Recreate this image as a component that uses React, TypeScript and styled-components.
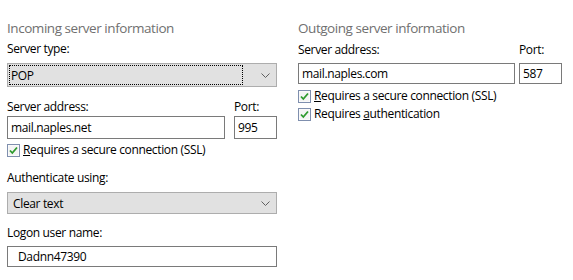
import React from 'react';
import styled, { createGlobalStyle } from 'styled-components';

const GlobalStyle = createGlobalStyle`
  html, body {
    margin: 0;
    padding: 0;
    background: #ffffff;
  }

  body {
    font-family: 'Open Sans', 'Noto Sans', sans-serif;
    font-size: 12px;
    letter-spacing: -0.35px;
    color: #000000;
  }
`;

const Page = styled.div`
  display: grid;
  grid-template-columns: 270px 264px;
  column-gap: 21px;
  padding: 19px 0 0 7px;
  width: 573px;
  height: 280px;
  box-sizing: border-box;
`;

const Column = styled.div`
  display: flex;
  flex-direction: column;
`;

const Title = styled.div`
  color: #707070;
  font-size: 13.5px;
  letter-spacing: -0.45px;
  height: 19px;
  line-height: 19px;
`;

const Label = styled.div<{ $top: number }>`
  height: 16px;
  line-height: 16px;
  margin-top: ${(p) => p.$top}px;
`;

const Row = styled.div<{ $gap: number; $top?: number }>`
  display: grid;
  grid-template-columns: 1fr 43px;
  column-gap: ${(p) => p.$gap}px;
  margin-top: ${(p) => p.$top ?? 0}px;
`;

const TextBox = styled.div<{ $height: number; $indent?: number; $top?: number }>`
  height: ${(p) => p.$height}px;
  line-height: ${(p) => p.$height - 2}px;
  margin-top: ${(p) => p.$top ?? 0}px;
  border: 1px solid #7a7a7a;
  padding-left: ${(p) => p.$indent ?? 3}px;
  box-sizing: border-box;
  background: #ffffff;
  white-space: nowrap;
`;

const Select = styled.div<{ $height: number; $top: number }>`
  display: flex;
  align-items: center;
  height: ${(p) => p.$height}px;
  margin-top: ${(p) => p.$top}px;
  border: 1px solid #adadad;
  background: #e1e1e1;
  box-sizing: border-box;
  padding: 1px;
`;

const SelectValue = styled.div<{ $focused?: boolean }>`
  flex: 1;
  align-self: stretch;
  display: flex;
  align-items: center;
  padding-left: ${(p) => (p.$focused ? 1 : 3)}px;
  margin-right: 18px;
  border: 1px dotted ${(p) => (p.$focused ? '#000000' : 'transparent')};
`;

const Chevron = styled.svg`
  width: 9px;
  height: 5px;
  margin-right: 5px;
  flex-shrink: 0;
`;

const Check = styled.label<{ $top: number }>`
  display: flex;
  align-items: center;
  gap: 3px;
  height: 16px;
  line-height: 16px;
  margin-top: ${(p) => p.$top}px;

  u {
    text-underline-offset: 1px;
  }
`;

const Box = styled.svg`
  width: 13px;
  height: 13px;
  flex-shrink: 0;
`;

function DropArrow (): React.ReactElement {
  return (
    <Chevron viewBox='0 0 9 5'>
      <path d='M0.5 0.5 L4.5 4.5 L8.5 0.5' fill='none' stroke='#606060' strokeWidth='1' />
    </Chevron>
  );
}

function CheckBox ({ top, children }: { top: number; children: React.ReactNode }): React.ReactElement {
  return (
    <Check $top={top}>
      <Box viewBox='0 0 13 13'>
        <rect x='0.5' y='0.5' width='12' height='12' fill='#ffffff' stroke='#7f8fae' />
        <rect x='1.5' y='1.5' width='10' height='10' fill='#f4f4f4' />
        <path d='M3 6.5 L5.3 9 L10 3.5' fill='none' stroke='#2d9a2d' strokeWidth='1.8' />
      </Box>
      <span>{children}</span>
    </Check>
  );
}

export default function App (): React.ReactElement {
  return (
    <>
      <GlobalStyle />
      <Page>
        <Column>
          <Title>Incoming server information</Title>
          <Label $top={3}>Server type:</Label>
          <Select $height={24} $top={6}>
            <SelectValue $focused>POP</SelectValue>
            <DropArrow />
          </Select>
          <Row $gap={9} $top={12}>
            <Label $top={0}>Server address:</Label>
            <Label $top={0}>Port:</Label>
          </Row>
          <Row $gap={9} $top={1}>
            <TextBox $height={23}>mail.naples.net</TextBox>
            <TextBox $height={23}>995</TextBox>
          </Row>
          <CheckBox top={3}><u>R</u>equires a secure connection (SSL)</CheckBox>
          <Label $top={12}>Authenticate using:</Label>
          <Select $height={22} $top={6}>
            <SelectValue>Clear text</SelectValue>
            <DropArrow />
          </Select>
          <Label $top={11}>Logon user name:</Label>
          <TextBox $height={21} $indent={10} $top={5}>Dadnn47390</TextBox>
        </Column>
        <Column>
          <Title>Outgoing server information</Title>
          <Row $gap={4} $top={4}>
            <Label $top={0}>Server address:</Label>
            <Label $top={0}>Port:</Label>
          </Row>
          <Row $gap={4} $top={5}>
            <TextBox $height={21}>mail.naples.com</TextBox>
            <TextBox $height={21}>587</TextBox>
          </Row>
          <CheckBox top={4}><u>R</u>equires a secure connection (SSL)</CheckBox>
          <CheckBox top={2}>Requires <u>a</u>uthentication</CheckBox>
        </Column>
      </Page>
    </>
  );
}
